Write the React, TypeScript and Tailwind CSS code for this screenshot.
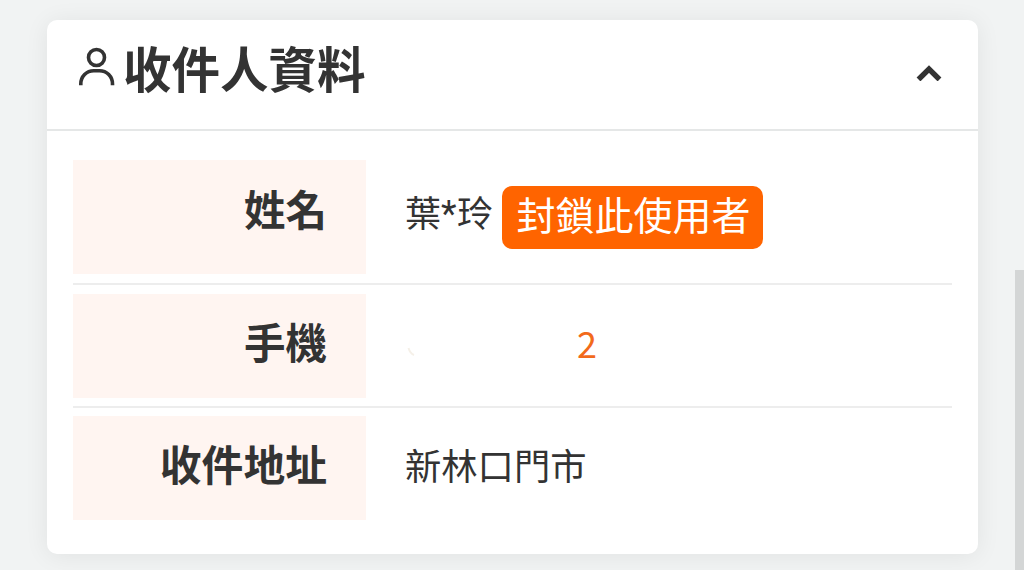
function UserIcon() {
  return (
    <svg width="37" height="42" viewBox="0 0 37 42" fill="none" stroke="#333" strokeWidth="3.6">
      <circle cx="18.500" cy="10.500" r="8" />
      <path d="M2.800 38.200v-1.200c0-7.500 5.700-13.200 13-13.200h5.700c7.300 0 13 5.700 13 13.200v1.200" />
    </svg>
  )
}

function ChevronUp() {
  return (
    <svg width="26" height="18" viewBox="0 0 26 18" fill="none" stroke="#333" strokeWidth="5.4">
      <path d="M2.500 16.500 13 6l10.500 10.500" />
    </svg>
  )
}

export default function App() {
  return (
    <div className="flex h-[570px] w-[1024px] overflow-hidden bg-[#f1f3f3] pl-[47px] font-['Noto_Sans_CJK_TC',sans-serif] text-[#333]">
      <section className="mt-5 h-[534px] w-[931px] rounded-[10px] bg-white shadow-[0_2px_24px_rgba(0,0,0,0.07)]">
        <header className="flex h-[111px] items-start justify-between border-b-2 border-[#e5e7e7] pr-[36px] pl-[31px]">
          <div className="flex items-start pt-[27px]">
            <UserIcon />
            <h2 className="-mt-[8px] ml-[8px] text-[48.500px] leading-[56px] font-bold whitespace-nowrap">收件人資料</h2>
          </div>
          <div className="pt-[43px]">
            <ChevronUp />
          </div>
        </header>

        <div className="flex flex-col px-[26px] pt-[29px]">
          <div className="flex h-[125px] border-b-2 border-[#ededed] pb-[9px]">
            <div className="w-[293px] bg-[#fff5f1] pt-[25px] pr-[39px] text-right text-[41.500px] leading-[46px] font-bold">姓名</div>
            <div className="flex items-start pl-[39px]">
              <span className="flex pt-[29px] text-[36px] leading-[44px] whitespace-nowrap">
                葉<span className="w-[16px] translate-y-[3px] font-[Roboto]">*</span>玲
              </span>
              <button className="mt-[26px] ml-[9px] h-[63px] w-[261px] rounded-[10px] bg-[#ff6400] pb-[8px] pl-[2px] text-[39px] leading-[55px] whitespace-nowrap text-white">封鎖此使用者</button>
            </div>
          </div>
          <div className="flex h-[123px] border-b-2 border-[#ededed] pt-[9px] pb-[8px]">
            <div className="w-[293px] bg-[#fff5f1] pt-[24px] pr-[39px] text-right text-[41.500px] leading-[46px] font-bold">手機</div>
            <div className="flex pt-[26px] pl-[41px] text-[36px] leading-[44px] text-[#f26a1b]">
              {/* leading digits are masked, only a faint trace is left */}
              <svg className="mt-[26px] mr-[162px]" width="8" height="12" viewBox="0 0 8 12" fill="none" stroke="#f5f0e8" strokeWidth="2">
                <path d="M1.500 2c1 3.500 3 6 5.500 7" />
              </svg>
              2
            </div>
          </div>
          <div className="flex h-[112px] pt-[8px]">
            <div className="w-[293px] bg-[#fff5f1] pt-[24px] pr-[39px] text-right text-[41.800px] leading-[46px] font-bold">收件地址</div>
            <div className="pt-[26px] pl-[39px] text-[36.300px] leading-[44px]">新林口門市</div>
          </div>
        </div>
      </section>
      <div className="mt-[270px] ml-auto w-[9px] bg-[#d4d6d6]" />
    </div>
  )
}
